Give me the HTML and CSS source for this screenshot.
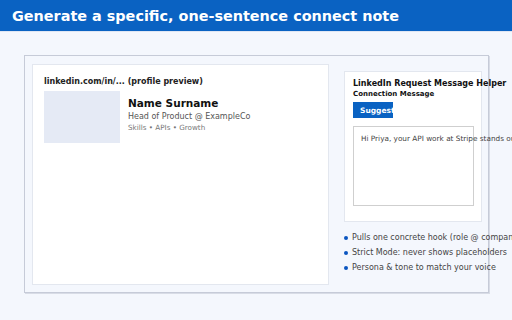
FILE: index.html
```html
<!DOCTYPE html>
<html lang="en">
<head>
  <meta charset="UTF-8" />
  <meta name="viewport" content="width=device-width, initial-scale=1.0" />
  <title>Connect Note</title>
  <link rel="stylesheet" href="styles.css">
</head>
<body>
  <header class="topbar">Generate a specific, one-sentence connect note</header>

  <main class="stage">
    <div class="frame">
      <section class="profile">
        <div class="profile-url">linkedin.com/in/... (profile preview)</div>
        <div class="profile-row">
          <div class="avatar"></div>
          <div class="profile-info">
            <div class="name">Name Surname</div>
            <div class="role">Head of Product @ ExampleCo</div>
            <div class="skills">Skills • APIs • Growth</div>
          </div>
        </div>
      </section>

      <aside class="side">
        <div class="helper">
          <div class="helper-title">LinkedIn Request Message Helper</div>
          <div class="helper-label">Connection Message</div>
          <button class="suggest">Suggest</button>
          <div class="message">Hi Priya, your API work at Stripe stands out</div>
        </div>
        <ul class="features">
          <li>Pulls one concrete hook (role @ company)</li>
          <li>Strict Mode: never shows placeholders</li>
          <li>Persona &amp; tone to match your voice</li>
        </ul>
      </aside>
    </div>
  </main>
</body>
</html>
```

FILE: styles.css
```css
html, body {
  margin: 0;
  padding: 0;
}
body {
  width: 512px;
  height: 320px;
  overflow: hidden;
  background-color: #f4f7fd;
  font-family: "DejaVu Sans", Verdana, sans-serif;
  color: #222;
}
.topbar {
  height: 32px;
  box-sizing: border-box;
  padding: 0 12px;
  display: flex;
  align-items: center;
  background-color: #0a62c2;
  color: white;
  font-size: 14.4px;
  font-weight: bold;
  border-bottom: 1px solid #dfe6f3;
}
.stage {
  padding: 23px 0 0 24px;
}
.frame {
  width: 465px;
  height: 238px;
  box-sizing: border-box;
  display: flex;
  gap: 15px;
  padding: 8px 0 0 7px;
  border: 1px solid #c6cbd8;
  box-shadow: 1px 1px 0 #d8dce6;
  background-color: #f4f7fd;
}
.profile {
  width: 297px;
  height: 221px;
  box-sizing: border-box;
  padding: 12px 11px;
  background-color: white;
  border: 1px solid #e3e7ef;
}
.profile-url {
  font-size: 8px;
  font-weight: bold;
  color: #222;
}
.profile-row {
  display: flex;
  gap: 8px;
  margin-top: 5px;
}
.avatar {
  width: 76px;
  height: 52px;
  background-color: #e5eaf5;
}
.profile-info {
  padding-top: 6px;
}
.name {
  font-size: 10.5px;
  font-weight: bold;
  color: #111;
}
.role {
  margin-top: 3px;
  font-size: 8px;
  color: #555;
}
.skills {
  margin-top: 2px;
  font-size: 7.2px;
  color: #777;
}
.side {
  padding-top: 7px;
  width: 138px;
}
.helper {
  width: 138px;
  height: 151px;
  box-sizing: border-box;
  padding: 7px 8px;
  background-color: white;
  border: 1px solid #e3e7ef;
  white-space: nowrap;
}
.helper-title {
  font-size: 8px;
  font-weight: bold;
  color: #111;
}
.helper-label {
  margin-top: 2px;
  font-size: 7px;
  font-weight: bold;
  color: #111;
}
.suggest {
  display: block;
  width: 40px;
  height: 16px;
  margin-top: 4px;
  padding: 0 0 0 7px;
  overflow: hidden;
  white-space: nowrap;
  text-align: left;
  border: none;
  background-color: #0a62c2;
  color: white;
  font-family: inherit;
  font-size: 7.5px;
  font-weight: bold;
}
.message {
  width: 121px;
  height: 80px;
  box-sizing: border-box;
  margin-top: 8px;
  padding: 7px 7px;
  border: 1px solid #cfcfcf;
  font-size: 7.3px;
  color: #444;
}
.features {
  list-style: none;
  margin: 8px 0 0 0;
  padding: 0;
  white-space: nowrap;
}
.features li {
  display: flex;
  align-items: center;
  gap: 4px;
  height: 15px;
  font-size: 8px;
  color: #444;
}
.features li::before {
  content: "";
  flex-shrink: 0;
  width: 4px;
  height: 4px;
  border-radius: 50%;
  background-color: #0a55c0;
}
```
